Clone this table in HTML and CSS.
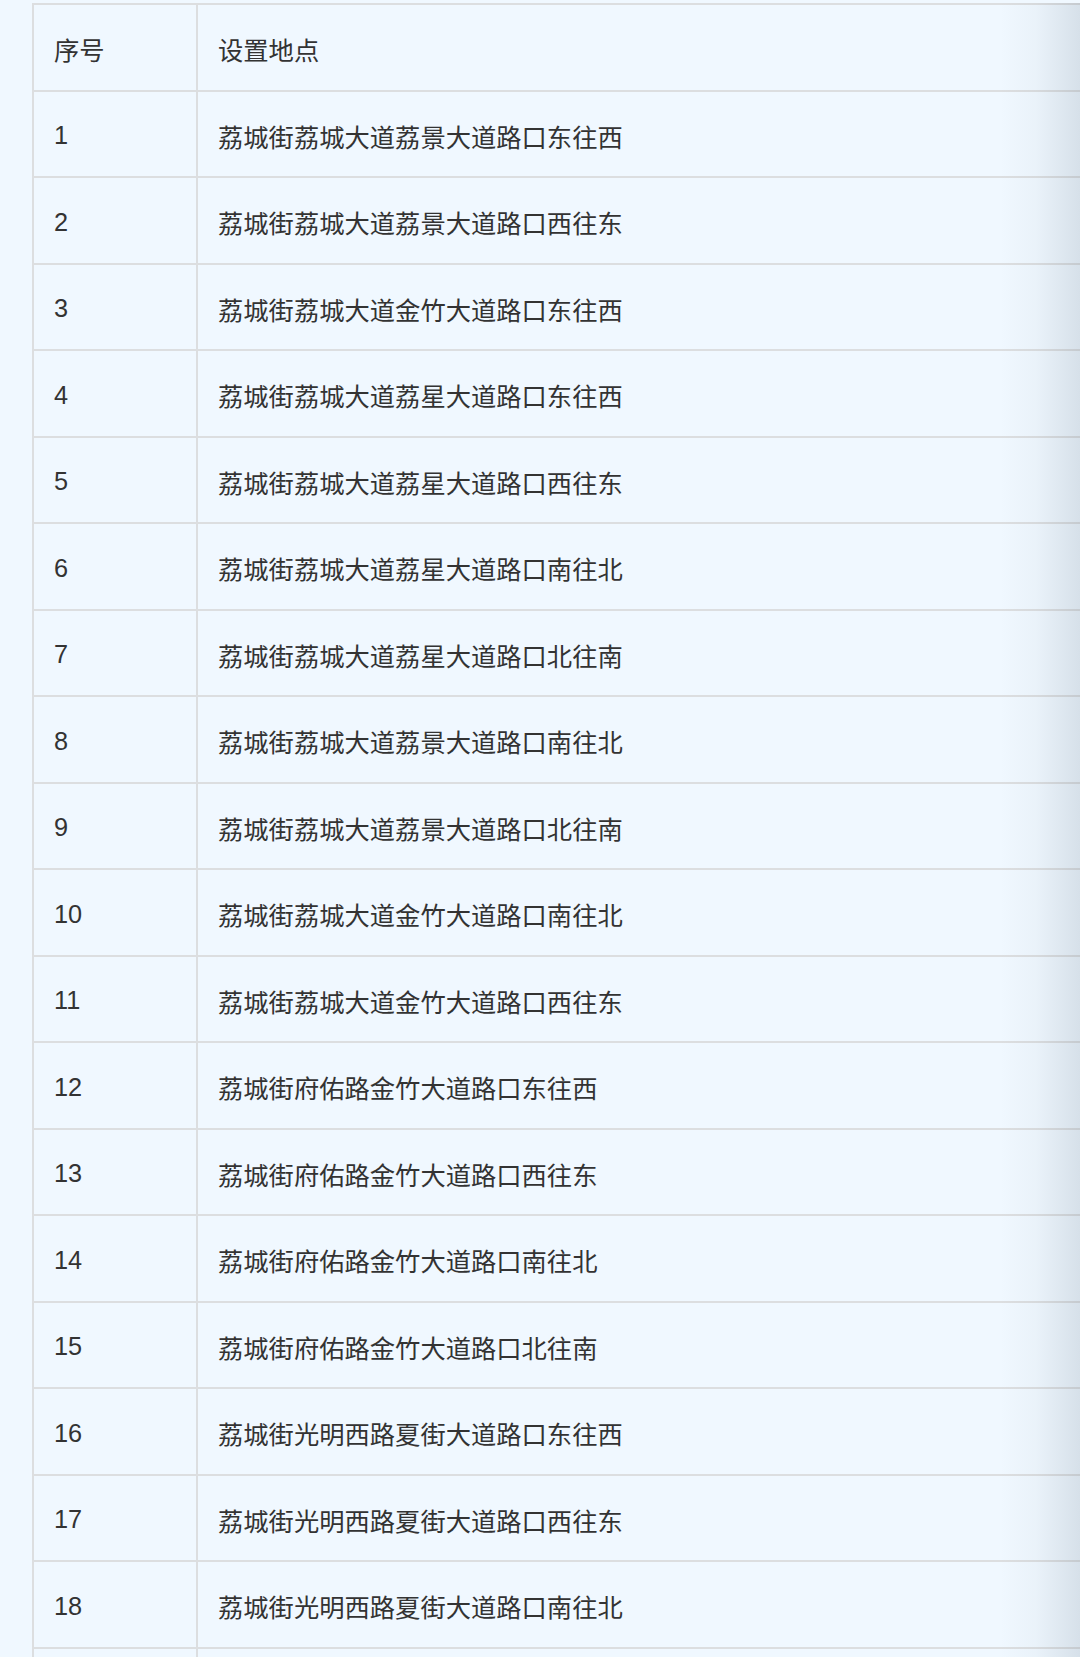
FILE: index.html
```html
<!DOCTYPE html>
<html lang="zh-CN">
<head>
<meta charset="utf-8">
<title>设置地点</title>
<link rel="stylesheet" href="styles.css">
</head>
<body>
<div class="table-wrap">
  <div class="table-scroll">
    <table class="site-table">
      <thead>
        <tr><th class="col-no">序号</th><th class="col-place">设置地点</th></tr>
      </thead>
      <tbody>
        <tr><td>1</td><td>荔城街荔城大道荔景大道路口东往西</td></tr>
        <tr><td>2</td><td>荔城街荔城大道荔景大道路口西往东</td></tr>
        <tr><td>3</td><td>荔城街荔城大道金竹大道路口东往西</td></tr>
        <tr><td>4</td><td>荔城街荔城大道荔星大道路口东往西</td></tr>
        <tr><td>5</td><td>荔城街荔城大道荔星大道路口西往东</td></tr>
        <tr><td>6</td><td>荔城街荔城大道荔星大道路口南往北</td></tr>
        <tr><td>7</td><td>荔城街荔城大道荔星大道路口北往南</td></tr>
        <tr><td>8</td><td>荔城街荔城大道荔景大道路口南往北</td></tr>
        <tr><td>9</td><td>荔城街荔城大道荔景大道路口北往南</td></tr>
        <tr><td>10</td><td>荔城街荔城大道金竹大道路口南往北</td></tr>
        <tr><td>11</td><td>荔城街荔城大道金竹大道路口西往东</td></tr>
        <tr><td>12</td><td>荔城街府佑路金竹大道路口东往西</td></tr>
        <tr><td>13</td><td>荔城街府佑路金竹大道路口西往东</td></tr>
        <tr><td>14</td><td>荔城街府佑路金竹大道路口南往北</td></tr>
        <tr><td>15</td><td>荔城街府佑路金竹大道路口北往南</td></tr>
        <tr><td>16</td><td>荔城街光明西路夏街大道路口东往西</td></tr>
        <tr><td>17</td><td>荔城街光明西路夏街大道路口西往东</td></tr>
        <tr><td>18</td><td>荔城街光明西路夏街大道路口南往北</td></tr>
        <tr><td>19</td><td>荔城街光明西路夏街大道路口北往南</td></tr>
      </tbody>
    </table>
  </div>
  <div class="scroll-shadow"></div>
</div>
</body>
</html>
```

FILE: styles.css
```css
html, body {
  margin: 0;
  padding: 0;
  background: #f0f8ff;
}

body {
  font-family: "Liberation Sans", "Noto Sans CJK SC", sans-serif;
  color: #333333;
  font-size: 25.3px;
}

.table-wrap {
  position: relative;
  margin: 3px 0 0 32px;
}

.table-scroll {
  overflow: hidden;
}

.site-table {
  border-collapse: collapse;
  width: 1200px;
  background: #f0f8ff;
}

.site-table th,
.site-table td {
  border: 2px solid #dcdee0;
  height: 86.5px;
  padding: 4px 20px 0 20px;
  text-align: left;
  font-weight: normal;
  vertical-align: middle;
  white-space: nowrap;
  box-sizing: border-box;
}

.site-table tr > :first-child {
  width: 164px;
}

.scroll-shadow {
  position: absolute;
  top: 0;
  right: 0;
  bottom: 0;
  width: 80px;
  background: linear-gradient(to right, rgba(80, 100, 120, 0) 0%, rgba(80, 100, 120, 0.04) 45%, rgba(80, 100, 120, 0.16) 100%);
  pointer-events: none;
}
```
